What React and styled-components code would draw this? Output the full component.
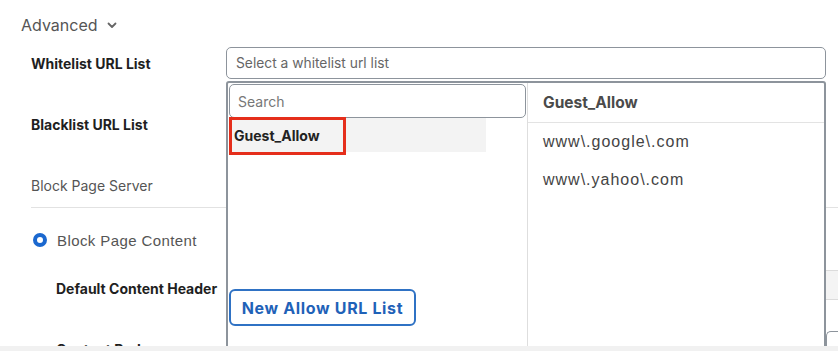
import React from 'react';
import styled, { createGlobalStyle } from 'styled-components';

const GlobalStyle = createGlobalStyle`
  body {
    margin: 0;
    background: #fff;
    font-family: Inter, "Liberation Sans", Arial, sans-serif;
    color: #222;
  }
`;

const Page = styled.div`
  position: relative;
  height: 351px;
  overflow: hidden;
`;

const SectionToggle = styled.div`
  display: flex;
  align-items: center;
  gap: 9px;
  margin: 14px 0 0 21px;
  height: 22px;
  font-size: 16px;
  color: #555;
`;

const Row = styled.div`
  display: grid;
  grid-template-columns: 195px 1fr;
  align-items: center;
  padding-left: 31px;
  margin-top: ${(p) => p.$top || 0}px;
  height: ${(p) => p.$height || 32}px;
`;

const Label = styled.div`
  font-size: 14px;
  font-weight: 700;
  color: #1f1f1f;
  padding-left: ${(p) => (p.$indent ? 25 : 0)}px;
  padding-top: ${(p) => p.$shift || 0}px;
  align-self: ${(p) => p.$align || 'center'};
`;

const Field = styled.div`
  position: relative;
  height: 100%;
`;

const SelectBox = styled.div`
  box-sizing: border-box;
  display: flex;
  align-items: center;
  width: 600px;
  height: 32px;
  padding-left: 9px;
  border: 1.5px solid #8d949c;
  border-radius: 5px;
  font-size: 13.8px;
  color: #666;
`;

const SubHeader = styled.div`
  margin: 36px 0 0 31px;
  height: 32px;
  box-sizing: border-box;
  line-height: 20px;
  font-size: 14px;
  color: #555;
  border-bottom: 1px solid #e2e2e2;
`;

const RadioRow = styled.div`
  display: flex;
  align-items: center;
  gap: 10px;
  margin: 23px 0 0 33px;
  height: 18px;
  font-family: "Liberation Sans", Arial, sans-serif;
  font-size: 15px;
  letter-spacing: 0.4px;
  color: #555;
`;

const Radio = styled.span`
  box-sizing: border-box;
  width: 14px;
  height: 14px;
  border-radius: 50%;
  border: 4px solid #1b68cf;
  background: #fff;
`;

const GrayInput = styled.div`
  box-sizing: border-box;
  height: 30px;
  background: #f4f4f4;
  border-top: 1px solid #dcdcdc;
  border-bottom: 1px solid #dcdcdc;
`;

const BodyBox = styled.div`
  box-sizing: border-box;
  margin-left: 600px;
  margin-top: 2px;
  height: 40px;
  border: 1.5px solid #8d949c;
  border-right: none;
  border-bottom: none;
  border-radius: 5px 0 0 0;
`;

const Dropdown = styled.div`
  position: absolute;
  top: 34px;
  left: 0;
  width: 600px;
  height: 300px;
  box-sizing: border-box;
  border: 2px solid #8d949c;
  border-radius: 3px;
  background: #fff;
  display: flex;
  z-index: 5;
`;

const ListColumn = styled.div`
  width: 299px;
  display: flex;
  flex-direction: column;
  padding: 1px 0 0 1px;
  box-sizing: border-box;
`;

const SearchBox = styled.div`
  box-sizing: border-box;
  height: 34px;
  width: 297px;
  display: flex;
  align-items: center;
  padding-left: 8px;
  border: 1.5px solid #8d949c;
  border-radius: 5px;
  font-size: 14px;
  color: #777;
`;

const ListItem = styled.div`
  position: relative;
  height: 34px;
  width: 257px;
  display: flex;
  align-items: center;
  padding-left: 5px;
  box-sizing: border-box;
  background: ${(p) => (p.$active ? '#f3f3f3' : 'transparent')};
  font-size: 14px;
  font-weight: 700;
  color: #222;
`;

const Highlight = styled.span`
  position: absolute;
  left: 0;
  top: -1px;
  width: 117px;
  height: 38px;
  box-sizing: border-box;
  border: 3px solid #e52e1b;
`;

const NewButton = styled.button`
  margin-top: 137px;
  width: 187px;
  height: 37px;
  box-sizing: border-box;
  background: #fff;
  border: 2px solid #2f72c4;
  border-radius: 6px;
  font-family: Inter, "Liberation Sans", Arial, sans-serif;
  font-size: 16px;
  font-weight: 700;
  letter-spacing: 0.65px;
  color: #1f62b8;
  cursor: pointer;
`;

const DetailColumn = styled.div`
  flex: 1;
  border-left: 1px solid #dedede;
`;

const DetailHeader = styled.div`
  height: 39px;
  display: flex;
  align-items: center;
  padding-left: 15px;
  border-bottom: 1px solid #e3e3e3;
  font-size: 15.5px;
  font-weight: 700;
  color: #4a4a4a;
`;

const DetailItem = styled.div`
  height: 38px;
  display: flex;
  align-items: center;
  padding-left: 15px;
  font-family: "Liberation Sans", Arial, sans-serif;
  font-size: 16px;
  letter-spacing: 1px;
  color: #444;
`;

const BottomStrip = styled.div`
  position: absolute;
  left: 0;
  right: 0;
  bottom: 0;
  height: 5px;
  background: #f1f1f1;
  z-index: 10;
`;

const Chevron = () => (
  <svg width="10" height="7" viewBox="0 0 10 7">
    <polyline points="1.5,1.5 5,5 8.5,1.5" fill="none" stroke="#666" strokeWidth="1.8" strokeLinecap="round" strokeLinejoin="round" />
  </svg>
);

const urls = ['www\\.google\\.com', 'www\\.yahoo\\.com'];

export default function App() {
  return (
    <Page>
      <GlobalStyle />
      <SectionToggle>
        Advanced <Chevron />
      </SectionToggle>

      <Row $top={11}>
        <Label>Whitelist URL List</Label>
        <Field>
          <SelectBox>Select a whitelist url list</SelectBox>
          <Dropdown>
            <ListColumn>
              <SearchBox>Search</SearchBox>
              <ListItem $active>
                Guest_Allow
                <Highlight />
              </ListItem>
              <NewButton>New Allow URL List</NewButton>
            </ListColumn>
            <DetailColumn>
              <DetailHeader>Guest_Allow</DetailHeader>
              {urls.map((u) => (
                <DetailItem key={u}>{u}</DetailItem>
              ))}
            </DetailColumn>
          </Dropdown>
        </Field>
      </Row>

      <Row $top={29}>
        <Label>Blacklist URL List</Label>
        <Field>
          <SelectBox>Select a blacklist url list</SelectBox>
        </Field>
      </Row>

      <SubHeader>Block Page Server</SubHeader>

      <RadioRow>
        <Radio />
        Block Page Content
      </RadioRow>

      <Row $top={21} $height={30}>
        <Label $indent $shift={6}>Default Content Header</Label>
        <GrayInput />
      </Row>

      <Row $top={29} $height={42}>
        <Label $indent $align="start" $shift={12}>Content Body</Label>
        <BodyBox />
      </Row>

      <BottomStrip />
    </Page>
  );
}
